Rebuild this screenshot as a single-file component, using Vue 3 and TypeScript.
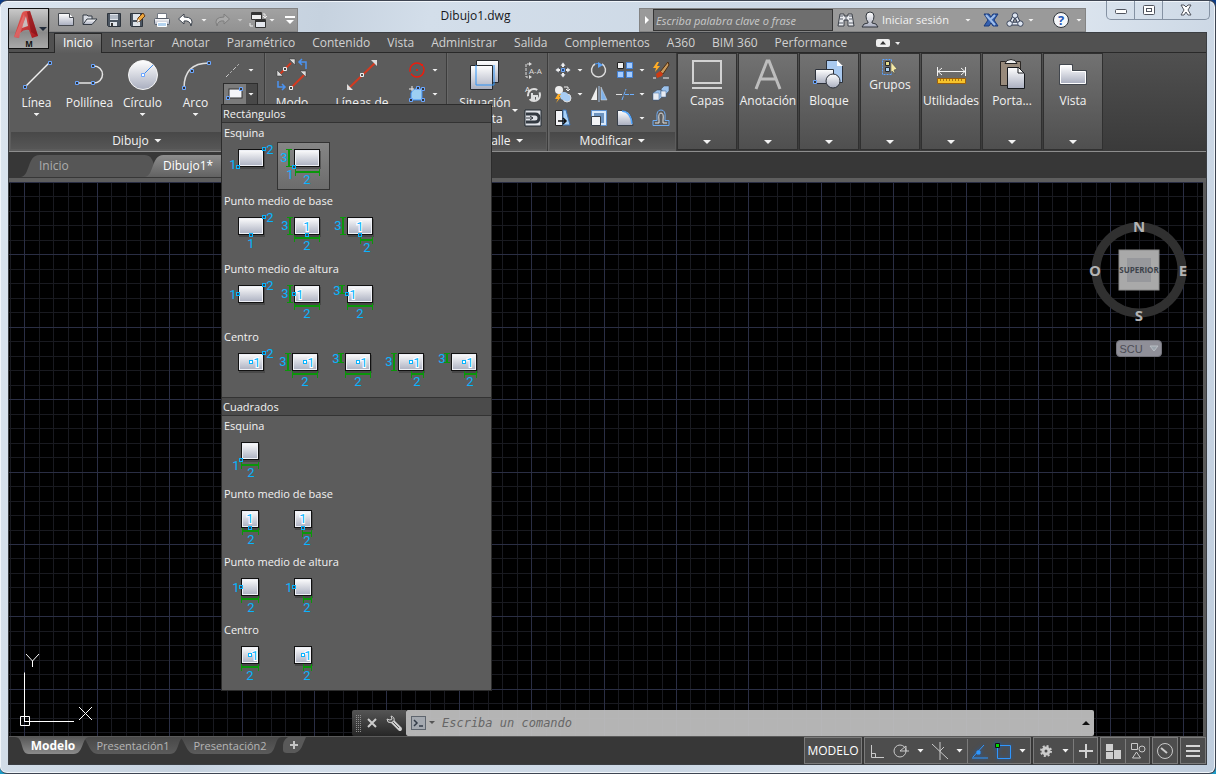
<script setup lang="ts">
interface Glyph { t: string; x: number; y: number; halo?: boolean }
interface Shape {
  name: string
  box: [number, number, number, number]
  points: [number, number][]
  glyphs: Glyph[]
  h?: [number, number, number]
  v?: [number, number, number]
  active?: boolean
}
interface Section { label: string; shapes: Shape[] }
interface Group { title: string; sections: Section[] }

const g = (t: string, x: number, y: number, halo = false): Glyph => ({ t, x, y, halo })

const groups: Group[] = [
  {
    title: 'Rectángulos',
    sections: [
      {
        label: 'Esquina',
        shapes: [
          { name: 'Dos esquinas', box: [14, 7, 26, 18], points: [[40, 7], [14, 25]], glyphs: [g('2', 46, 12), g('1', 9, 27)] },
          { name: 'Esquina, anchura y altura', active: true, box: [17, 7, 26, 18], points: [[17, 25]], glyphs: [g('3', 7, 20), g('1', 13, 37), g('2', 30, 42)], h: [18, 43, 30], v: [12, 7, 25] },
        ],
      },
      {
        label: 'Punto medio de base',
        shapes: [
          { name: 'Base y esquina', box: [14, 7, 26, 18], points: [[40, 7], [27, 25]], glyphs: [g('2', 46, 12), g('1', 27, 38)] },
          { name: 'Base, anchura y altura', box: [17, 7, 26, 18], points: [[30, 25]], glyphs: [g('3', 8, 20), g('1', 30, 21, true), g('2', 30, 40)], h: [17, 43, 28], v: [13, 7, 25] },
          { name: 'Base, media anchura y altura', box: [17, 7, 26, 18], points: [[30, 25]], glyphs: [g('3', 8, 20), g('1', 30, 21, true), g('2', 37, 42)], h: [30, 43, 30], v: [13, 7, 25] },
        ],
      },
      {
        label: 'Punto medio de altura',
        shapes: [
          { name: 'Altura y esquina', box: [14, 7, 26, 18], points: [[40, 7], [14, 16]], glyphs: [g('2', 46, 12), g('1', 9, 21)] },
          { name: 'Altura, anchura', box: [17, 7, 26, 18], points: [[17, 16]], glyphs: [g('3', 8, 20), g('1', 23, 21, true), g('2', 30, 40)], h: [17, 43, 28], v: [13, 7, 25] },
          { name: 'Media altura, anchura', box: [17, 7, 26, 18], points: [[17, 16]], glyphs: [g('3', 7, 17), g('1', 23, 21, true), g('2', 30, 40)], h: [17, 43, 28], v: [12, 7, 16] },
        ],
      },
      {
        label: 'Centro',
        shapes: [
          { name: 'Centro y esquina', box: [14, 7, 26, 18], points: [[40, 7], [27, 16]], glyphs: [g('2', 46, 12), g('1', 33, 21, true)] },
          { name: 'Centro, anchura y altura', box: [15, 7, 26, 18], points: [[28, 16]], glyphs: [g('3', 6, 20), g('1', 34, 21, true), g('2', 28, 40)], h: [15, 41, 28], v: [11, 7, 25] },
          { name: 'Centro, anchura y media altura', box: [15, 7, 26, 18], points: [[28, 16]], glyphs: [g('3', 6, 17), g('1', 34, 21, true), g('2', 28, 40)], h: [15, 41, 28], v: [11, 7, 17] },
          { name: 'Centro, media anchura y altura', box: [15, 7, 26, 18], points: [[28, 16]], glyphs: [g('3', 6, 20), g('1', 34, 21, true), g('2', 34, 40)], h: [28, 41, 28], v: [11, 7, 25] },
          { name: 'Centro, media anchura y media altura', box: [15, 7, 26, 18], points: [[28, 16]], glyphs: [g('3', 6, 17), g('1', 34, 21, true), g('2', 34, 40)], h: [28, 41, 28], v: [11, 7, 17] },
        ],
      },
    ],
  },
  {
    title: 'Cuadrados',
    sections: [
      {
        label: 'Esquina',
        shapes: [
          { name: 'Esquina y lado', box: [17, 7, 18, 18], points: [[17, 25]], glyphs: [g('1', 12, 35), g('2', 27, 42)], h: [17, 35, 30] },
        ],
      },
      {
        label: 'Punto medio de base',
        shapes: [
          { name: 'Base y lado', box: [17, 7, 18, 18], points: [[26, 25]], glyphs: [g('1', 26, 20, true), g('2', 27, 41)], h: [18, 35, 28] },
          { name: 'Base y medio lado', box: [17, 7, 18, 18], points: [[26, 25]], glyphs: [g('1', 26, 20, true), g('2', 30, 42)], h: [25, 35, 30] },
        ],
      },
      {
        label: 'Punto medio de altura',
        shapes: [
          { name: 'Altura y lado', box: [17, 7, 18, 18], points: [[17, 16]], glyphs: [g('1', 12, 21), g('2', 27, 41)], h: [17, 35, 28] },
          { name: 'Altura y medio lado', box: [17, 7, 18, 18], points: [[17, 16]], glyphs: [g('1', 12, 21), g('2', 30, 41)], h: [26, 35, 28] },
        ],
      },
      {
        label: 'Centro',
        shapes: [
          { name: 'Centro y lado', box: [17, 7, 18, 18], points: [[26, 16]], glyphs: [g('1', 31, 21, true), g('2', 26, 41)], h: [17, 35, 28] },
          { name: 'Centro y medio lado', box: [17, 7, 18, 18], points: [[26, 16]], glyphs: [g('1', 31, 21, true), g('2', 30, 41)], h: [26, 35, 28] },
        ],
      },
    ],
  },
]

const menus = ['Inicio', 'Insertar', 'Anotar', 'Paramétrico', 'Contenido', 'Vista', 'Administrar', 'Salida', 'Complementos', 'A360', 'BIM 360', 'Performance']
const collapsed = ['Capas', 'Anotación', 'Bloque', 'Grupos', 'Utilidades', 'Porta...', 'Vista']

/* Drawing grid: every fifth line is a major one */
const step = 14.48
const lines = (origin: number, count: number) =>
  Array.from({ length: count }, (_, i) => ({ p: Math.round(origin + i * step), major: i % 5 === 0 }))
const columns = lines(-57, 180)
const rows = lines(0, 120)
</script>

<template>
  <div class="window">
    <svg class="defs" width="0" height="0" aria-hidden="true">
      <defs>
        <linearGradient id="paper" x1="0" y1="0" x2="0" y2="1"><stop offset="0" stop-color="#fff" /><stop offset="1" stop-color="#a9aebf" /></linearGradient>
        <linearGradient id="red" x1="0" y1="0" x2="1" y2="1"><stop offset="0" stop-color="#f0655e" /><stop offset="1" stop-color="#a3141b" /></linearGradient>
        <linearGradient id="tabOff" x1="0" y1="0" x2="0" y2="1"><stop offset="0" stop-color="#484848" /><stop offset="1" stop-color="#5b5b5b" /></linearGradient>
        <linearGradient id="tabOn" x1="0" y1="0" x2="0" y2="1"><stop offset="0" stop-color="#575757" /><stop offset="1" stop-color="#8b8b8b" /></linearGradient>
        <linearGradient id="docOn" x1="0" y1="0" x2="0" y2="1"><stop offset="0" stop-color="#8d8d8d" /><stop offset="1" stop-color="#626262" /></linearGradient>
      </defs>
    </svg>

    <header class="titlebar">
      <button class="appbtn" aria-label="Menú de la aplicación">
        <svg width="40" height="40" viewBox="0 0 40 40">
          <path d="M5 28 L13 4 Q14 2 17 2 L21 2 L29 27 L23 29 L20 21 Q15 20 11 24 L10 29 Z" fill="url(#red)" />
          <path d="M14 15 L17 7 L19 17 L13 19 Z" fill="#c9bcbc" />
          <path d="M5 28 L15 5 L16 9 L10 29Z" fill="#e88" opacity=".5" />
          <path d="M18 3 L22 23 L29 27 L21 2Z" fill="#7e0c12" opacity=".55" />
          <path d="M30 18h8l-4 4z" fill="#222c3a" />
          <text x="20" y="38" text-anchor="middle" font-size="8" font-weight="700" fill="#111">M</text>
        </svg>
      </button>
      <div class="qat">
        <button aria-label="Nuevo"><svg width="18" height="16" viewBox="0 0 18 16"><path d="M1.500 1.500h11l4 4v8h-15z" fill="url(#paper)" stroke="#44484e" /><path d="M12.500 1.500v4h4" fill="#fff" stroke="#44484e" /></svg></button>
        <button aria-label="Abrir"><svg width="18" height="16" viewBox="0 0 18 16"><path d="M2 12V3h4l1 1h4v3" fill="#d8dbe2" stroke="#333a44" /><path d="M2 12.500 6 7h10l-5 5.500z" fill="url(#paper)" stroke="#333a44" /></svg></button>
        <button aria-label="Guardar"><svg width="16" height="16" viewBox="0 0 16 16"><path d="M1.500 1.500h13v13h-12l-1-1z" fill="#4b5561" stroke="#2d343d" /><path d="M4 2h8v6H4z" fill="#dfe4ea" /><path d="M4 4h8M4 6h8" stroke="#8893a3" /><path d="M4 10h7v4H4z" fill="#dfe4ea" /><path d="M5 11h2v3H5z" fill="#333" /></svg></button>
        <button aria-label="Guardar como"><svg width="18" height="16" viewBox="0 0 18 16"><path d="M1.500 1.500h12v13h-11l-1-1z" fill="#4b5561" stroke="#2d343d" /><path d="M4 2h7v6H4z" fill="#dfe4ea" /><path d="M4 10h7v4H4z" fill="#dfe4ea" /><path d="m8 10 1-4 5-5 2 3-5 5z" fill="#eda63c" stroke="#633b17" /><path d="m8 10 1-3 2 2z" fill="#fff" /></svg></button>
        <button aria-label="Trazar"><svg width="18" height="16" viewBox="0 0 18 16"><path d="M4.500 1.500h9v5h-9z" fill="#fff" stroke="#747a84" /><rect x="1.500" y="6.500" width="15" height="6" rx="1" fill="url(#paper)" stroke="#59606b" /><path d="M4.500 10.500h9v4h-9z" fill="#b4d3ef" stroke="#fff" /></svg></button>
        <button aria-label="Deshacer"><svg width="18" height="16" viewBox="0 0 18 16"><path d="M7 2 1.500 7 7 12V9q6-1 7 5 4-9-7-9z" fill="#fff" stroke="#3c434d" /></svg></button>
        <span class="caret"></span>
        <button aria-label="Rehacer"><svg width="18" height="16" viewBox="0 0 18 16"><path d="M11 2 16.500 7 11 12V9q-6-1-7 5-4-9 7-9z" fill="#a9a9a9" stroke="#7e7e7e" /></svg></button>
        <span class="caret dim"></span>
        <button aria-label="Espacios"><svg width="18" height="18" viewBox="0 0 18 18"><path d="M2.500 1.500h10v7h-10z" fill="#eee" stroke="#333" /><path d="M3 3h9" stroke="#333" stroke-width="2" /><path d="M6.500 8.500h10v8h-10z" fill="#e4e7ed" stroke="#333" /><path d="M7 10h9" stroke="#333" stroke-width="2" /><path d="M14 3h2v3M14 5l2 2 2-2M4 15H1v-3" fill="none" stroke="#eee" /></svg></button>
        <span class="caret near"></span>
        <button class="more" aria-label="Personalizar"><svg width="10" height="12" viewBox="0 0 10 12"><path d="M0 3h10" stroke="#fff" stroke-width="2" /><path d="M1 6h8l-4 4z" fill="#fff" /></svg></button>
      </div>
      <h1>Dibujo1.dwg</h1>
      <div class="info">
        <button class="expand" aria-label="Contraer búsqueda"><svg width="6" height="10" viewBox="0 0 6 10"><path d="M1 1v8l4-4z" fill="#fff" /></svg></button>
        <input class="search" type="text" aria-label="Buscar" placeholder="Escriba palabra clave o frase" />
        <button class="ico" aria-label="Buscar"><svg width="18" height="18" viewBox="0 0 18 18"><path d="M3 3h4v2h4V3h4l2 12h-6V9H7v6H1z" fill="#e9ebef" stroke="#3a3f47" /><path d="M3 5h3M12 5h3M3 8h3M12 8h3M2 12h4M12 12h4M9 5v5" stroke="#555b66" /></svg></button>
        <button class="signin"><svg width="18" height="18" viewBox="0 0 18 18"><path d="M5 5q0-4 4-4t4 4q0 4-2 6v1q5 0 6 4H1q1-4 6-4v-1Q5 9 5 5z" fill="url(#paper)" stroke="#30353c" /></svg>Iniciar sesión</button>
        <span class="caret push"></span>
        <button class="ico" aria-label="Exchange"><svg width="16" height="16" viewBox="0 0 16 16"><path d="M1 2h5l2 3 2-3h5l-4 6 4 6h-5l-2-3-2 3H1l4-6z" fill="#3561b0" stroke="#1b3a7b" /><path d="m3 3 9 10M12 3 7 8" stroke="#9dbdea" stroke-width="2" /></svg></button>
        <button class="ico" aria-label="A360"><svg width="18" height="18" viewBox="0 0 20 18"><path d="M10 3 5 13h10z" fill="none" stroke="#303b52" stroke-width="4" stroke-linejoin="round" /><path d="M10 3 5 13h10z" fill="none" stroke="#e9eef7" stroke-width="2" /><g fill="#dfe6f2" stroke="#303b52"><circle cx="10" cy="4" r="3" /><circle cx="4" cy="13" r="3" /><circle cx="16" cy="13" r="3" /></g></svg></button>
        <span class="caret"></span>
        <button class="ico help" aria-label="Ayuda"><svg width="18" height="18" viewBox="0 0 18 18"><circle cx="9" cy="9" r="7.500" fill="#f5f7fa" stroke="#30353c" /><text x="9" y="14" text-anchor="middle" font-size="13" font-weight="700" fill="#2457b8">?</text></svg></button>
        <span class="caret"></span>
      </div>
      <div class="winctl">
        <button aria-label="Minimizar"><svg width="14" height="14" viewBox="0 0 14 14"><rect x="1.500" y="6.500" width="11" height="4" rx="1" fill="#fff" stroke="#50545e" /></svg></button>
        <button aria-label="Restaurar"><svg width="14" height="14" viewBox="0 0 14 14"><rect x="1.500" y="2.500" width="11" height="9" rx="1" fill="#fff" stroke="#50545e" /><rect x="4.500" y="5.500" width="5" height="3" fill="#fff" stroke="#50545e" /></svg></button>
        <button class="close" aria-label="Cerrar"><svg width="14" height="14" viewBox="0 0 14 14"><path d="M2 2h3l2 2 2-2h3L9 7l3 5H9L7 9l-2 3H2l3-5z" fill="#fff" stroke="#50545e" /></svg></button>
      </div>
    </header>

    <div class="client">
      <nav class="menus">
        <a v-for="(m, i) in menus" :key="m" href="#" :class="{ on: i === 0 }">{{ m }}</a>
        <button class="minimize" aria-label="Minimizar cinta"><svg width="24" height="10" viewBox="0 0 24 10"><rect x="0" y="1" width="14" height="8" rx="2" fill="#eee" /><path d="M4 6.500h6L7 3z" fill="#333" /><path d="M19 4h5l-2 3z" fill="#eee" /></svg></button>
      </nav>

      <div class="ribbon">
        <section class="panel draw">
          <div class="tools">
            <button class="big"><svg width="32" height="32" viewBox="0 0 32 32"><path d="M4 28 28 4" stroke="#f0f0f0" stroke-width="1.500" /><path d="M2.500 26.500h3v3h-3zM27.500 2.500h3v3h-3z" class="node" /></svg>Línea<i class="caret"></i></button>
            <button class="big"><svg width="32" height="32" viewBox="0 0 32 32"><path d="M3 24h17a8 8 0 0 0 0-17" fill="none" stroke="#e4e4e4" stroke-width="1.500" /><path d="M1.500 22.500h3v3h-3zM17.500 22.500h3v3h-3zM17.500 5.500h3v3h-3z" class="node" /></svg>Polilínea</button>
            <button class="big"><svg width="32" height="32" viewBox="0 0 32 32"><circle cx="16" cy="16" r="14.500" fill="url(#paper)" stroke="#f6f6f6" /><path d="m16 16 10-10" stroke="#3d8cf0" /><path d="M14.500 14.500h3v3h-3z" class="node light" /></svg>Círculo<i class="caret"></i></button>
            <button class="big"><svg width="32" height="32" viewBox="0 0 32 32"><path d="M4 29Q4 4 29 4" fill="none" stroke="#ddd" stroke-width="1.500" /><path d="M2.500 27.500h3v3h-3zM10.500 10.500h3v3h-3zM27.500 2.500h3v3h-3z" class="node" /></svg>Arco<i class="caret"></i></button>
            <div class="small pair">
              <button aria-label="Línea auxiliar"><svg width="18" height="18" viewBox="0 0 18 18"><path d="M2 16 16 2" stroke="#ccc" stroke-dasharray="4 2 2 2" /></svg></button><i class="caret"></i>
              <div class="split"><button aria-label="Rectángulo" aria-expanded="true"><svg width="18" height="18" viewBox="0 0 18 18"><rect x="3" y="4" width="13" height="9" fill="#f4f5f8" stroke="#333" /><path d="M.500 11.500h3v3h-3zM13.500 2.500h3v3h-3z" class="node" /></svg></button><button class="arrow" aria-label="Más formas"><i class="caret"></i></button></div>
            </div>
          </div>
          <button class="ptitle">Dibujo<i class="caret big-caret"></i></button>
        </section>

        <section class="panel template">
          <div class="tools">
            <button class="big"><svg width="34" height="34" viewBox="0 0 34 34"><path d="m5 16 11-11M17 29 30 16" stroke="#d33a20" stroke-width="2" /><path d="M14 1h6v6zM2 12v6h6zM25 13h6v6z" fill="#ddd" stroke="#333" stroke-width=".5" /><path d="M8.500 9.500h3v3h-3zM14.500 28.500h3v3h-3z" fill="#444" stroke="#eee" /><path d="M31 11V4h-7m3-3-3 3 3 3M3 23v6h7m-3-3 3 3-3 3" fill="none" stroke="#4b93f0" stroke-width="1.500" /></svg>Modo</button>
            <button class="big"><svg width="34" height="34" viewBox="0 0 34 34"><path d="M4 30 31 4" stroke="#d33a20" stroke-width="2" /><path d="M26 2h6v6zM2 26v6h6z" fill="#ddd" /><path d="M15.500 15.500h3v3h-3z" fill="#555" stroke="#eee" /></svg>Líneas de</button>
            <div class="small pair">
              <button aria-label="Círculo de centro"><svg width="18" height="18" viewBox="0 0 18 18"><circle cx="9" cy="9" r="7" fill="none" stroke="#ed1c0c" stroke-width="1.500" stroke-dasharray="18 2" /><path d="M8 8h2v2H8zM13 3h2v2h-2z" fill="#ed1c0c" /></svg></button><i class="caret"></i>
              <button aria-label="Región"><svg width="18" height="18" viewBox="0 0 18 18"><path d="M3 15V8q2-6 11-4v11z" fill="#9dcff2" stroke="#3d8cf0" /><path d="M1 4h5M4 1v5" stroke="#eee" /><path d="M1.500 13.500h3v3h-3zM13.500 13.500h3v3h-3zM13.500 2.500h3v3h-3zM8.500 1.500h3v3h-3z" class="node" /></svg></button><i class="caret"></i>
            </div>
          </div>
          <div class="ptitle"></div>
        </section>

        <section class="panel detail">
          <div class="tools">
            <button class="big"><svg width="32" height="32" viewBox="0 0 32 32"><path d="M7.500 1.500h22v22h-22z" fill="url(#paper)" stroke="#26292d" /><path d="M1.500 6.500h22v24h-22z" fill="url(#paper)" stroke="#26292d" /><path d="M7 6v20h18V6" fill="none" stroke="#2f93f5" /></svg><span>Situación planta</span></button>
            <i class="caret side"></i>
            <div class="small">
              <button aria-label="Sección"><svg width="18" height="18" viewBox="0 0 18 18"><path d="M6 3H2v13h4" fill="none" stroke="#ddd" stroke-dasharray="3 1" /><path d="m5 1 3 2-3 2zM5 14l3 2-3 2z" fill="#ddd" /><text x="5" y="13" font-size="8" fill="#ddd">A-A</text></svg></button>
              <button aria-label="Detalle circular"><svg width="18" height="18" viewBox="0 0 18 18"><circle cx="10" cy="10" r="6" fill="none" stroke="#ddd" stroke-width="2" stroke-dasharray="14 3" /><path d="M8 8v7h2v-4h3v4" fill="none" stroke="#ddd" stroke-width="2" /><text x="1" y="7" font-size="8" fill="#eee">A</text></svg></button>
              <button aria-label="Símbolo"><svg width="18" height="18" viewBox="0 0 18 18"><path d="M1 1h16v16H1z" fill="#dfe2e8" stroke="#222a33" /><path d="M2 5h9q4 0 4 4t-4 4H2" fill="none" stroke="#323941" stroke-width="3" /><path d="M2 9h7m-3-2 3 2-3 2" fill="none" stroke="#323941" /></svg></button>
            </div>
          </div>
          <div class="ptitle">Detalle<i class="caret big-caret"></i></div>
        </section>

        <section class="panel modify">
          <div class="tools grid">
            <button aria-label="Desplazar"><svg width="18" height="18" viewBox="0 0 18 18"><path d="m9 1 3 4H6zM9 17l3-4H6zM1 9l4-3v6zM17 9l-4-3v6z" fill="#eee" stroke="#3c434d" stroke-width=".5" /><path d="M9 4v2M9 12v2M4 9h2M12 9h2" stroke="#eee" stroke-width="2" /><path d="M7.500 7.500h3v3h-3z" fill="#244a85" stroke="#70a7f5" /></svg></button><i class="caret"></i>
            <button aria-label="Girar"><svg width="18" height="18" viewBox="0 0 18 18"><path d="M12 3A7 7 0 1 1 5 3" fill="none" stroke="#ddd" stroke-width="1.500" /><path d="M5 3q3-1 5 0" fill="none" stroke="#4ca0ff" /><path d="M8 1l5 3-5 3z" fill="#5ba3fa" /></svg></button>
            <button aria-label="Matriz"><svg width="18" height="18" viewBox="0 0 18 18"><path d="M1.500 1.500h6v6h-6z" fill="#eee" stroke="#222" /><g fill="#a5ccff" stroke="#4482d5"><path d="M10.500 1.500h6v6h-6zM1.500 10.500h6v6h-6zM10.500 10.500h6v6h-6z" /></g></svg></button><i class="caret"></i>
            <button aria-label="Borrar"><svg width="18" height="18" viewBox="0 0 18 18"><path d="M16 1 8 11l3 2 6-9z" fill="#c89a5d" stroke="#4d2d11" /><path d="m8 10-4 3 1 4 5-2 1-2z" fill="#cf3b13" /><path d="m5 1-4 6h3L3 11l5-6H5l2-4z" fill="#ffad26" /><path d="M1 17h3M11 17h6" stroke="#eee" /></svg></button>
            <button aria-label="Copiar"><svg width="18" height="18" viewBox="0 0 18 18"><circle cx="5" cy="5" r="4" fill="#eee" /><circle cx="13" cy="13" r="4" fill="#a8cdf4" stroke="#ddd" /><circle cx="10" cy="11" r="4" fill="#a8cdf4" /><path d="M10 2h4v4m-2-2 2 2 2-2" fill="none" stroke="#eee" /><path d="m4 9-3 5h3l-2 4 5-6H5l2-3z" fill="#ffad26" /></svg></button><i class="caret"></i>
            <button aria-label="Simetría"><svg width="18" height="18" viewBox="0 0 18 18"><path d="M7 2v13H1z" fill="#eee" /><path d="M11 2v13h6z" fill="#7fb2ea" stroke="#ddd" stroke-width=".5" /><path d="M9 1v16" stroke="#a8c5e8" /></svg></button>
            <button aria-label="Recortar"><svg width="18" height="18" viewBox="0 0 18 18"><path d="M0 9.500h6" stroke="#ddd" /><path d="M6 15 10 4M9 9.500h9" stroke="#6db0ff" stroke-dasharray="4 1" /></svg></button><i class="caret"></i>
            <button aria-label="Descomponer"><svg width="18" height="18" viewBox="0 0 18 18"><path d="m1 8 4-3h5v7l-3 3H1zM9 4l3-3h5v5l-3 3H9z" fill="#9cc2ec" stroke="#3c434d" stroke-width=".5" /><path d="M1 8h6v7H1zM9 6h5v6H9z" fill="#e7ebf2" stroke="#3c6598" stroke-width=".5" /></svg></button>
            <button aria-label="Estirar"><svg width="18" height="18" viewBox="0 0 18 18"><path d="M1.500 1.500h7v15h-7z" fill="#f2f3f6" stroke="#222" /><path d="M9 1h3l4 15H9z" fill="#a8d1f7" stroke="#3d72b3" /><path d="M4 12h8m-3-3 3 3-3 3" fill="none" stroke="#111" stroke-width="1.500" /></svg></button><i></i>
            <button aria-label="Escala"><svg width="18" height="18" viewBox="0 0 18 18"><path d="M1.500 1.500h15v15h-15z" fill="#d8e8fa" stroke="#5d90ce" /><path d="M4 4h10v10H4z" fill="#6c93c0" /><path d="M1.500 7.500h9v9h-9z" fill="#f2f3f6" stroke="#39404a" /></svg></button>
            <button aria-label="Empalme"><svg width="18" height="18" viewBox="0 0 18 18"><path d="M1.500 16.500v-15H7q9 0 10 15z" fill="url(#paper)" stroke="#39404a" /><path d="M6 2q9 1 10 13" fill="none" stroke="#52a4fa" stroke-width="1.500" /></svg></button><i class="caret"></i>
            <button aria-label="Desfase"><svg width="18" height="18" viewBox="0 0 18 18"><path d="M1 16.500h16v-5h-4V9q1-8-4-8T5 9v2.500H1z" fill="none" stroke="#6dabf4" /><path d="M3 14h4v-3q-1-7 2-7t2 7v3h4" fill="none" stroke="#e2e2e2" /></svg></button>
          </div>
          <button class="ptitle">Modificar<i class="caret big-caret"></i></button>
        </section>

        <button v-for="(c, i) in collapsed" :key="c" class="folded">
          <svg v-if="i === 0" width="34" height="34" viewBox="0 0 34 34"><path d="M3 3h28v22H3z" fill="none" stroke="#d2d2d2" stroke-width="2" /><path d="M2 30h30" stroke="#d2d2d2" stroke-width="2" /></svg>
          <svg v-else-if="i === 1" width="34" height="34" viewBox="0 0 34 34"><path d="M5 31 16 3h2l11 28M9 21h16" fill="none" stroke="#bdbdbd" stroke-width="3" /></svg>
          <svg v-else-if="i === 2" width="34" height="34" viewBox="0 0 34 34"><path d="M14.500 2.500h11l5 5v17h-16z" fill="#a9c9ef" stroke="#2c313a" /><path d="M25 2v6h6z" fill="#fff" /><path d="M3.500 11.500h18v14h-18z" fill="url(#paper)" stroke="#2c313a" /><circle cx="21" cy="23" r="7" fill="url(#paper)" stroke="#2c313a" /><path d="M1.500 22.500h3v3h-3z" class="node" /></svg>
          <svg v-else-if="i === 3" width="18" height="18" viewBox="0 0 18 18"><path d="M1.500 1.500h9v15h-9z" fill="none" stroke="#5aa2ff" stroke-dasharray="2 1" /><path d="M4.500 3.500h4v4h-4z" fill="#e9dd8a" stroke="#26292e" /><path d="M4.500 9.500h4v4h-4z" fill="#aed2f4" stroke="#26292e" /><path d="m10 4 6 7-3 1 1 4-3-3-1 2z" fill="#f5eaa5" stroke="#444" stroke-width=".5" /></svg>
          <svg v-else-if="i === 4" width="34" height="34" viewBox="0 0 34 34"><path d="M3.500 9v9M31.500 9v9M4 13.500h27M8 10l-4 3.500L8 17M27 10l4 3.500-4 3.500" fill="none" stroke="#f2f2f2" /><path d="M3.500 20.500h28v5h-28z" fill="#f6c32b" stroke="#9d600a" /><path d="M6.500 21v2M9.500 21v2M12.500 21v2M15.500 21v2M18.500 21v2M21.500 21v2M24.500 21v2M27.500 21v2" stroke="#a87612" /></svg>
          <svg v-else-if="i === 5" width="34" height="34" viewBox="0 0 34 34"><path d="M5.500 3.500h20v24h-20z" fill="#988a7b" stroke="#2b2724" /><path d="M10 5.500q1-4 6-4t6 4z" fill="#eee" stroke="#222" /><path d="M12.500 9.500h11l6 6v15h-17z" fill="url(#paper)" stroke="#16191d" /><path d="M23 9v6h6z" fill="#fff" stroke="#16191d" /></svg>
          <svg v-else width="34" height="34" viewBox="0 0 34 34"><path d="M4.500 7.500h11v6h14v12h-25z" fill="url(#paper)" stroke="#fff" /><path d="M3.500 6.500h13v6h14v14h-27z" fill="none" stroke="#42474e" /></svg>
          <span>{{ c }}</span><i class="caret big-caret"></i>
        </button>
      </div>

      <div class="docs">
        <button class="doc"><svg viewBox="0 0 132 24" preserveAspectRatio="none" aria-hidden="true"><path d="M0 23C9 22 6 1 18 1h104c10 0 10 16 10 22z" fill="#565656" /></svg><span>Inicio</span></button>
        <button class="doc on"><svg viewBox="0 0 132 24" preserveAspectRatio="none" aria-hidden="true"><path d="M0 23C9 22 6 1 18 1h104c10 0 10 16 10 22z" fill="url(#docOn)" /></svg><span>Dibujo1*</span></button>
      </div>

      <main class="canvas">
        <svg class="gridlines" width="100%" height="100%" aria-hidden="true" shape-rendering="crispEdges">
          <template v-for="pass in [false, true]" :key="String(pass)">
            <line v-for="c in columns.filter(l => l.major === pass)" :key="'c' + c.p" :x1="c.p" :x2="c.p" y1="0" y2="100%" :class="{ major: c.major }" />
            <line v-for="r in rows.filter(l => l.major === pass)" :key="'r' + r.p" x1="0" x2="100%" :y1="r.p" :y2="r.p" :class="{ major: r.major }" />
          </template>
        </svg>
        <svg class="ucs" width="90" height="80" viewBox="0 0 90 80" aria-hidden="true"><g fill="none" stroke="#fff"><path d="M11.500 67.500h9v9h-9zM15.500 72.500v-49M15 72.500h50" /><path d="m17 5 6.500 7L30 5M23.500 12v6M70 58l13 13M83 58 70 71" /></g></svg>
        <div class="cube">
          <svg width="100" height="104" viewBox="0 0 100 104">
            <circle cx="50" cy="51" r="43" fill="none" stroke="#303030" stroke-width="9" />
            <rect x="30" y="31" width="40" height="40" fill="#a9a9a9" stroke="#8b8b8b" /><rect x="38" y="39" width="24" height="24" fill="#97989c" />
            <text class="face" x="50" y="54" text-anchor="middle">SUPERIOR</text>
            <g class="dir" text-anchor="middle"><text x="50" y="13">N</text><text x="50" y="102">S</text><text x="6" y="57">O</text><text x="94" y="57">E</text></g>
          </svg>
          <button class="scu">SCU<svg width="10" height="8" viewBox="0 0 10 8"><path d="M1 1h8L5 6z" fill="#9aa3ab" stroke="#b9bec4" /></svg></button>
        </div>
        <div class="cmd">
          <div class="handle">
            <svg class="grip" width="6" height="18" viewBox="0 0 6 18"><path d="M.500 1v17M2.500 1v17M4.500 1v17" stroke="#8f8f8f" stroke-dasharray="1 1" /></svg>
            <button aria-label="Cerrar"><svg width="12" height="12" viewBox="0 0 12 12"><path d="m2 2 8 8M10 2l-8 8" stroke="#ccc" stroke-width="2" /></svg></button>
            <button aria-label="Personalizar"><svg width="16" height="16" viewBox="0 0 16 16"><path d="m6 6 8 8" stroke="#cfcfcf" stroke-width="4" stroke-linecap="round" /><path d="m7 7 6 6" stroke="#555" /><path d="M5 1q4 1 3 5-3 3-6 1L1 4l3 1 2-1z" fill="#555" stroke="#cfcfcf" /></svg></button>
          </div>
          <div class="entry">
            <svg width="28" height="16" viewBox="0 0 28 16"><rect x="1.500" y="1.500" width="14" height="13" fill="#a4a9b0" stroke="#5e656e" /><path d="m4 5 3 3-3 3M9 11h4" fill="none" stroke="#333c48" stroke-width="1.500" /><path d="M19 6h6l-3 3z" fill="#555" /></svg>
            <input type="text" aria-label="Línea de comandos" placeholder="Escriba un comando" />
            <button aria-label="Historial"><svg width="8" height="6" viewBox="0 0 8 6"><path d="M0 5h8L4 1z" fill="#111" /></svg></button>
          </div>
        </div>
      </main>

      <footer class="status">
        <div class="layouts">
          <button class="on"><svg viewBox="0 0 96 18" preserveAspectRatio="none" aria-hidden="true"><path d="M0 0C12 0 6 17 18 17h58C90 17 86 0 96 0z" fill="url(#tabOn)" /></svg><span>Modelo</span></button>
          <button><svg viewBox="0 0 96 18" preserveAspectRatio="none" aria-hidden="true"><path d="M0 0C7 0 6 17 16 17h66C92 17 88 0 96 0z" fill="url(#tabOff)" /></svg><span>Presentación1</span></button>
          <button><svg viewBox="0 0 96 18" preserveAspectRatio="none" aria-hidden="true"><path d="M0 0C7 0 6 17 16 17h66C92 17 88 0 96 0z" fill="url(#tabOff)" /></svg><span>Presentación2</span></button>
          <button class="plus" aria-label="Nueva presentación"><svg viewBox="0 0 24 18" aria-hidden="true"><path d="M6 0q-6 3-5 13 0 3 4 3h8q6-2 8-9l3-7z" fill="#595959" /><path d="M12 4v8M8 8h8" stroke="#c5c5c5" stroke-width="2" /></svg></button>
        </div>
        <div class="toggles">
          <div class="box"><button class="model">MODELO</button></div>
          <div class="box">
            <button aria-label="Orto"><svg width="18" height="18" viewBox="0 0 18 18"><path d="M3.500 3v12.500H16M3.500 11.500h4v4" class="st" /></svg></button>
            <button aria-label="Polar"><svg width="18" height="18" viewBox="0 0 18 18"><circle cx="8" cy="9" r="6" class="st" /><path d="M8 9h9M8 9l6-5v5" class="st" /></svg></button><i class="caret"></i>
            <button aria-label="Isométrico"><svg width="18" height="18" viewBox="0 0 18 18"><path d="m1 2 16 15M9 0v18M9 9l4-4" class="st" /></svg></button><i class="caret"></i>
            <button class="sep" aria-label="Rastreo"><svg class="lit" width="18" height="18" viewBox="0 0 18 18"><path d="M1 16h16M2 15 13 3" /><path d="M6 9h3v3H6z" fill="#2f97ff" /></svg></button>
            <button aria-label="Referencia a objetos"><svg class="lit" width="18" height="18" viewBox="0 0 18 18"><path d="M3.500 3.500h13v13h-13z" /><path d="M1.500 1.500h4v4h-4z" fill="#00d800" stroke="#111" /></svg></button><i class="caret"></i>
          </div>
          <div class="box">
            <button aria-label="Espacio de trabajo"><svg width="18" height="18" viewBox="0 0 18 18"><circle cx="9" cy="9" r="3" fill="none" stroke="#ccc" stroke-width="3" /><circle cx="9" cy="9" r="5" fill="none" stroke="#ccc" stroke-width="2" stroke-dasharray="2 1.927" /></svg></button><i class="caret"></i>
            <button class="sep" aria-label="Añadir"><svg width="18" height="18" viewBox="0 0 18 18"><path d="M9 2v14M2 9h14" stroke="#d2d2d2" stroke-width="2" /></svg></button>
          </div>
          <div class="box">
            <button aria-label="Unidades"><svg width="18" height="18" viewBox="0 0 18 18"><path d="M2 2h7v7H2zM2 10h7v7H2zM10 8h7v9h-7z" fill="#cfcfcf" /></svg></button>
            <button class="sep" aria-label="Aislar"><svg width="18" height="18" viewBox="0 0 18 18"><path d="M2.500 1.500h6v6h-6zM7.500 10l4 6h-8z" class="st" /><circle cx="13" cy="7" r="3" class="st" /></svg></button>
          </div>
          <div class="box"><button aria-label="Rendimiento"><svg width="18" height="18" viewBox="0 0 18 18"><circle cx="9" cy="9" r="7.500" class="st" /><path d="m5 6 6 5" class="st" stroke-width="2" /></svg></button></div>
          <div class="box"><button aria-label="Personalización"><svg width="18" height="18" viewBox="0 0 18 18"><path d="M2 4h14M2 9h14M2 14h14" stroke="#d6d6d6" stroke-width="2" /></svg></button></div>
        </div>
      </footer>
    </div>

    <div class="popup" role="menu">
      <template v-for="grp in groups" :key="grp.title">
        <h2>{{ grp.title }}</h2>
        <div v-for="sec in grp.sections" :key="sec.label" class="section">
          <h3>{{ sec.label }}</h3>
          <div class="cells">
            <button v-for="s in sec.shapes" :key="s.name" role="menuitem" :aria-label="s.name" :class="{ active: s.active }">
              <svg width="51" height="46" viewBox="1 1 51 46">
                <rect :x="s.box[0] + 1" :y="s.box[1] + 2" :width="s.box[2]" :height="s.box[3]" fill="#333" opacity=".5" />
                <rect :x="s.box[0] + 0.5" :y="s.box[1] + 0.5" :width="s.box[2] - 1" :height="s.box[3] - 1" fill="url(#paper)" stroke="#111" />
                <rect :x="s.box[0] + 1.5" :y="s.box[1] + 1.5" :width="s.box[2] - 3" :height="s.box[3] - 3" fill="none" stroke="#eef0f6" />
                <g v-if="s.h" class="dim-line">
                  <path :d="`M${s.h[0]} ${s.h[2]}H${s.h[1]}`" class="bar" />
                  <path :d="`M${s.h[0] + 0.5} ${s.h[2] - 3}v7M${s.h[1] - 0.5} ${s.h[2] - 3}v7`" />
                </g>
                <g v-if="s.v" class="dim-line">
                  <path :d="`M${s.v[0]} ${s.v[1]}V${s.v[2]}`" class="bar" />
                  <path :d="`M${s.v[0] - 3} ${s.v[1] + 0.5}h6M${s.v[0] - 3} ${s.v[2] - 0.5}h6`" />
                </g>
                <text v-for="(q, k) in s.glyphs" :key="'g' + k" :x="q.x" :y="q.y" text-anchor="middle" :class="{ halo: q.halo }">{{ q.t }}</text>
                <rect v-for="(p, k) in s.points" :key="k" :x="p[0] - 2" :y="p[1] - 2" width="4" height="4" fill="#08b4ff" />
                <rect v-for="(p, k) in s.points" :key="'i' + k" :x="p[0] - 1" :y="p[1] - 1" width="2" height="2" :fill="p[1] === 16 && p[0] > 17 ? '#fff' : '#3a4450'" />
              </svg>
            </button>
          </div>
        </div>
      </template>
    </div>
  </div>
</template>

<style>
body {
  margin: 0;
  background: linear-gradient(180deg, #0c3c86 0%, #175fa0 50%, #1b9cc8 100%);
}
</style>

<style scoped>
* { box-sizing: border-box; }
.window {
  position: relative;
  display: flex;
  flex-direction: column;
  height: 100vh;
  padding: 0 8px 8px;
  border: 1px solid #3e4552;
  border-width: 1px 1px 1px 0;
  border-radius: 7px;
  background: linear-gradient(100deg, #dbe5ef 0%, #c6d2df 24%, #d3deea 32%, #cbd7e4 60%, #dbe4ee 80%, #bfcddd 100%);
  box-shadow: inset 0 0 0 1px #f0f5fa;
  font: 12px/16px "Open Sans", "Noto Sans", sans-serif;
  color: #f2f2f2;
  overflow: hidden;
}
.defs { position: absolute; }
button {
  display: flex;
  align-items: center;
  justify-content: center;
  padding: 0;
  border: 0;
  background: none;
  color: inherit;
  font: inherit;
}
a { color: inherit; text-decoration: none; }
svg { display: block; flex: none; overflow: visible; }
.caret {
  flex: none;
  width: 6px;
  height: 3px;
  background: #f2f2f2;
  clip-path: polygon(0 0, 100% 0, 50% 100%);
}
.caret.dim { background: #c4c4c4; }
.big-caret { width: 8px; height: 4px; }
.node { fill: #333; stroke: #6ba6ff; }
.node.light { fill: #fff; }

.titlebar {
  display: flex;
  height: 31px;
  flex: none;
  align-items: flex-start;
  margin-right: -3px;
}
.appbtn {
  position: relative;
  z-index: 2;
  width: 41px;
  height: 41px;
  flex: none;
  margin-top: 7px;
  border: 1px solid #111;
  background: linear-gradient(#c9c9c9, #8a8a8a 60%, #a9a9a9);
}
.qat {
  display: flex;
  align-items: center;
  gap: 6px;
  flex: none;
  width: 249px;
  height: 24px;
  margin-top: 7px;
  padding-left: 7px;
  border: 1px solid #838383;
  background: linear-gradient(#a2a2a2, #929292);
}
.qat button { width: 18px; flex: none; }
.qat .near { margin-left: -4px; }
h1 {
  flex: 1;
  margin: 7px 0 0;
  padding-left: 14px;
  font-size: 12px;
  font-weight: 400;
  color: #16181b;
  text-align: center;
}
.info {
  display: flex;
  align-items: center;
  flex: none;
  width: 447px;
  height: 24px;
  margin-top: 7px;
  border: 1px solid #838383;
  background: #9a9a9a;
  font-size: 11px;
}
.expand { width: 13px; flex: none; }
.search {
  width: 180px;
  flex: none;
  height: 22px;
  padding: 0 2px;
  border: 1px solid #333;
  border-radius: 0;
  background: #6e6e6e;
  color: #fff;
  font: italic 11px "Open Sans", "Noto Sans", sans-serif;
}
.search::placeholder { color: #c9c9c9; opacity: 1; }
.ico { margin-left: 4px; }
.signin { gap: 3px; margin-left: 6px; white-space: nowrap; }
.push { margin: 0 8px 0 16px; }
.ico + .ico { margin-left: 7px; }
.info .ico + .caret { margin-left: 4px; }
.help.ico { margin-left: 18px; }
.info .help + .caret { margin-left: 6px; }
.winctl {
  display: flex;
  flex: none;
  height: 19px;
  margin-left: 20px;
  border: 1px solid #8592a3;
  border-top: 0;
  border-radius: 0 0 5px 5px;
}
.winctl button { width: 28px; border-right: 1px solid #8592a3; }
.winctl .close { width: 46px; border: 0; }

.client {
  display: flex;
  flex: 1;
  flex-direction: column;
  min-height: 0;
  border: 1px solid #3b3e42;
  background: #373737;
}
.menus {
  display: flex;
  gap: 17px;
  height: 20px;
  flex: none;
  padding-left: 45px;
  background: #515151;
  border-bottom: 1px solid #292929;
  color: #d2d2d2;
  white-space: nowrap;
}
.menus a { padding-top: 2px; }
.menus a.on {
  height: 20px;
  margin-right: -8px;
  padding: 1px 8px 0;
  border: 1px solid #292929;
  border-bottom: 0;
  background: linear-gradient(#777, #5d5d5d);
  color: #fff;
}
.minimize { margin-left: 12px; }

.ribbon {
  display: flex;
  height: 99px;
  flex: none;
  background: linear-gradient(#505050, #3a3a3a);
  border-bottom: 1px solid #8d8d8d;
}
.panel {
  display: flex;
  flex-direction: column;
  flex: none;
  background: #5c5c5c;
  border-right: 1px solid #3c3c3c;
  border-left: 1px solid #686868;
}
.draw { width: 256px; }
.template { width: 182px; }
.detail { width: 101px; }
.modify { width: 129px; }
.tools {
  display: flex;
  flex: 1;
  padding-top: 5px;
}
.big {
  position: relative;
  flex-direction: column;
  justify-content: flex-start;
  gap: 3px;
  width: 53px;
  text-align: center;
  line-height: 16px;
}
.big svg { height: 34px; }
.big .caret { margin-top: -1px; }
.template .big { width: 70px; white-space: nowrap; }
.template .big:first-child { width: 52px; }
.template .big + .big { width: 88px; }
.detail .big { width: 66px; margin-left: 4px; }
.side { align-self: flex-end; margin: 0 6px 20px -6px; }
.small {
  display: grid;
  grid-auto-rows: 24px;
  align-content: start;
  align-items: center;
}
.pair { grid-template-columns: 22px 14px; justify-items: center; }
.draw .pair { margin-left: auto; margin-right: 6px; }
.pair .split { grid-column: 1 / 3; }
.split {
  display: flex;
  width: 35px;
  height: 22px;
  border: 1px solid #2d2d2d;
  background: #7b7b7b;
}
.split button { flex: 1; }
.split .arrow { flex: none; width: 11px; background: #484848; }
.grid {
  display: grid;
  grid-template-columns: 22px 12px 26px 26px 8px 30px;
  grid-auto-rows: 24px;
  justify-items: center;
  align-items: center;
  align-content: start;
  padding-left: 3px;
}
.ptitle {
  display: flex;
  align-items: center;
  justify-content: center;
  gap: 5px;
  height: 17px;
  margin: 0 1px 2px;
  background: linear-gradient(#484848, #565656);
}
.folded {
  flex-direction: column;
  justify-content: flex-start;
  gap: 1px;
  width: 60px;
  flex: none;
  height: 97px;
  margin-right: 1px;
  padding: 4px 0 5px;
  border: 1px solid #303030;
  background: linear-gradient(#727272, #4f4f4f);
  white-space: nowrap;
}
.folded .caret { margin-top: auto; }

.docs {
  display: flex;
  height: 30px;
  flex: none;
  padding: 2px 0 0 12px;
  border-bottom: 4px solid #5e5e5e;
}
.doc {
  position: relative;
  width: 134px;
  justify-content: flex-start;
  padding-left: 18px;
  color: #adadad;
}
.doc svg { position: absolute; left: 0; top: 0; width: 100%; height: 100%; }
.doc span { position: relative; }
.doc.on { margin-left: -10px; color: #fff; }

.canvas {
  position: relative;
  flex: 1;
  min-height: 0;
  background: #000;
  border-right: 3px solid #5a5a5a;
  overflow: hidden;
}
.gridlines { position: absolute; inset: 0; }
.gridlines line { stroke: #191a20; }
.gridlines line.major { stroke: #2a2e44; }
.ucs { position: absolute; left: 0; bottom: 7px; }
.cube {
  position: absolute;
  top: 37px;
  right: 14px;
  display: flex;
  flex-direction: column;
  align-items: center;
  gap: 17px;
}
.face { font: 700 8px "Open Sans", "Noto Sans", sans-serif; fill: #3d434b; }
.dir { font-size: 15px; font-weight: 700; fill: #b4b4b4; }
.scu {
  gap: 6px;
  width: 46px;
  height: 17px;
  border: 1px solid #74747c;
  border-radius: 4px;
  background: #8f8f98;
  color: #4c4c55;
  font: 11px "Liberation Sans", Arial, sans-serif;
}
.cmd {
  position: absolute;
  right: 109px;
  left: 343px;
  bottom: 0;
  display: flex;
  height: 26px;
}
.handle {
  display: flex;
  align-items: center;
  gap: 8px;
  width: 54px;
  padding-left: 4px;
  border-radius: 2px 0 0 2px;
  background: linear-gradient(#555, #262626);
}
.handle .grip { margin-right: -4px; }
.entry {
  display: flex;
  flex: 1;
  align-items: center;
  padding: 0 4px;
  border-radius: 2px;
  background: rgba(191, 191, 191, .94);
}
.entry input {
  flex: 1;
  min-width: 0;
  padding: 0 4px;
  border: 0;
  background: none;
  font: italic 12px "DejaVu Sans Mono", "Liberation Mono", monospace;
}
.entry input::placeholder { color: #666; opacity: 1; }

.status {
  display: flex;
  height: 28px;
  flex: none;
  justify-content: space-between;
  border-top: 1px solid #5a5a5a;
}
.layouts { display: flex; height: 18px; padding-left: 6px; font-size: 11px; }
.layouts button {
  position: relative;
  width: 104px;
  margin-right: -7px;
  color: #b5b5b5;
}
.layouts svg { position: absolute; left: 0; top: 0; width: 100%; height: 18px; }
.layouts span { position: relative; }
.layouts .on { width: 74px; margin-right: -8px; padding-left: 2px; font-weight: 700; font-size: 12px; color: #fff; z-index: 1; }
.layouts .plus { width: 24px; margin-left: 7px; }
.toggles { display: flex; gap: 2px; color: #fff; }
.box {
  display: flex;
  align-items: center;
  border: 1px solid #7b7b7b;
  background: #4d4d4d;
}
.box button { width: 24px; height: 24px; }
.box .model { width: 56px; }
.box .caret { width: 7px; height: 4px; margin: 0 4px; }
.box .sep { border-left: 1px solid #7b7b7b; }
.st { fill: none; stroke: #c9c9c9; }
.lit { fill: none; stroke: #2f97ff; filter: drop-shadow(0 0 2px #1560c0); }

.popup {
  position: absolute;
  z-index: 5;
  top: 103px;
  left: 221px;
  width: 271px;
  border: 1px solid #2c2c2c;
  background: #5c5c5c;
}
.popup h2, .popup h3 { margin: 0; font-size: 11px; font-weight: 400; color: #f2f2f2; }
.popup h2 {
  height: 18px;
  margin-bottom: 2px;
  padding-left: 1px;
  line-height: 17px;
  border-bottom: 1px solid #333;
  background: #4b4b4b;
}
.section + h2 { height: 19px; border-top: 1px solid #333; }
.popup h3 { height: 17px; padding-left: 2px; line-height: 16px; }
.section { height: 68px; }
.cells { display: flex; padding-left: 2px; }
.cells button { width: 53px; height: 48px; border: 1px solid transparent; }
.cells .active { border-color: #333; background: linear-gradient(#868686, #6c6c6c); }
.cells text {
  font: 13px Roboto, "Liberation Sans", sans-serif;
  fill: #08b4ff;
}
.cells .halo { paint-order: stroke; stroke: #fff; stroke-width: 2px; }
.dim-line { fill: none; stroke: #0a960a; }
.dim-line .bar { stroke-width: 2px; }
</style>
